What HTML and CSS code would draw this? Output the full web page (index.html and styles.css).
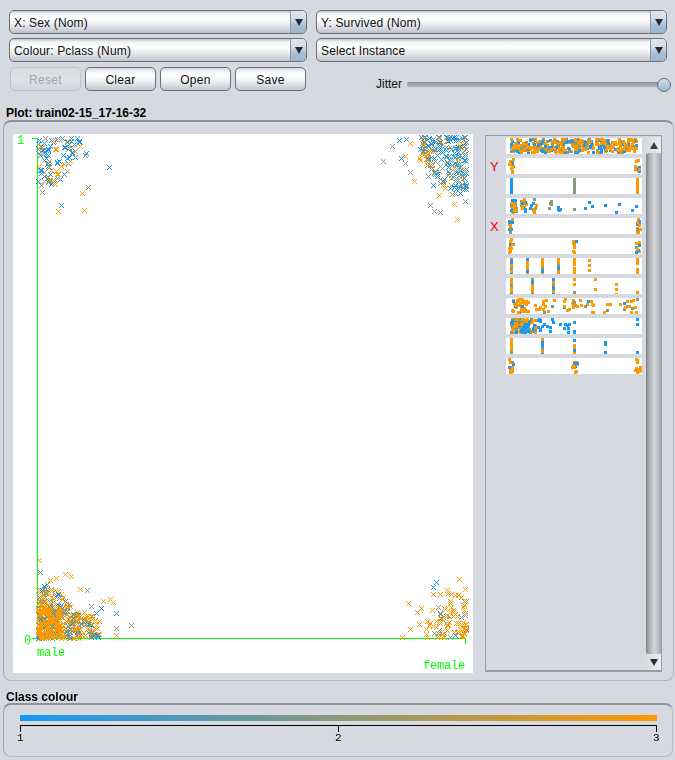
FILE: index.html
```html
<!DOCTYPE html>
<html lang="en">
<head>
<meta charset="utf-8">
<title>Plot: train02-15_17-16-32</title>
<link rel="stylesheet" href="styles.css">
</head>
<body>
<div class="controls">
  <div class="combo"><span class="combo-text">X: Sex (Nom)</span><span class="combo-arrow"><i class="tri"></i></span></div>
  <div class="combo"><span class="combo-text">Y: Survived (Nom)</span><span class="combo-arrow"><i class="tri"></i></span></div>
  <div class="combo"><span class="combo-text">Colour: Pclass (Num)</span><span class="combo-arrow"><i class="tri"></i></span></div>
  <div class="combo"><span class="combo-text">Select Instance</span><span class="combo-arrow"><i class="tri"></i></span></div>
  <div class="buttons">
    <button class="btn" disabled>Reset</button>
    <button class="btn">Clear</button>
    <button class="btn">Open</button>
    <button class="btn">Save</button>
  </div>
  <div class="jitter">
    <span class="jitter-label">Jitter</span>
    <div class="slider"><span class="slider-thumb"></span></div>
  </div>
</div>

<h2 class="section-title plot-title">Plot: train02-15_17-16-32</h2>
<section class="plot-panel">
  <div class="plot">
    <canvas id="scatter" width="460" height="539"></canvas>
    <span class="plot-label y1">1</span>
    <span class="plot-label y0">0</span>
    <span class="plot-label xmale">male</span>
    <span class="plot-label xfemale">female</span>
  </div>
  <div class="side">
    <div class="strips" id="strips"></div>
    <div class="scrollbar">
      <span class="sb-btn sb-up"><i class="tri-up"></i></span>
      <span class="sb-thumb"></span>
      <span class="sb-btn sb-down"><i class="tri"></i></span>
    </div>
  </div>
</section>

<h2 class="section-title legend-title">Class colour</h2>
<section class="legend-panel">
  <div class="legend-bar"></div>
  <div class="legend-axis">
    <span class="tick"><span class="tick-label">1</span></span>
    <span class="tick"><span class="tick-label">2</span></span>
    <span class="tick"><span class="tick-label">3</span></span>
  </div>
</section>
<script src="script.js"></script>
</body>
</html>
```
FILE: styles.css
```css
* { box-sizing: border-box; }
html, body { margin: 0; padding: 0; }
body {
  width: 675px;
  height: 760px;
  overflow: hidden;
  background: #d6d9df;
  font-family: "Liberation Sans", Arial, sans-serif;
  font-size: 12px;
  color: #111;
}

/* top controls */
.controls {
  display: grid;
  grid-template-columns: 298px 351px;
  grid-auto-rows: 24px;
  column-gap: 9px;
  row-gap: 4px;
  padding: 10px 0 0 9px;
}
.combo {
  display: flex;
  align-items: stretch;
  border: 1px solid #6a7078;
  border-radius: 5px;
  overflow: hidden;
  background: linear-gradient(#c2c5cb 0, #f4f5f7 14%, #ffffff 35%, #e6e8ec 65%, #bfc3cb 100%);
}
.combo-text { flex: 1; padding: 1px 0 0 4px; line-height: 22px; letter-spacing: 0.15px; }
.combo-arrow {
  width: 16px;
  display: flex;
  align-items: center;
  justify-content: center;
  border-left: 1px solid #8a97a6;
  background: linear-gradient(#dfe6ee 0, #d3deea 35%, #a9bfd4 65%, #9db6ce 100%);
}
.tri {
  display: block;
  width: 0;
  height: 0;
  border-left: 4px solid transparent;
  border-right: 4px solid transparent;
  border-top: 7px solid #2a2e33;
}
.tri-up {
  display: block;
  width: 0;
  height: 0;
  border-left: 4px solid transparent;
  border-right: 4px solid transparent;
  border-bottom: 7px solid #3a3d42;
}
.buttons {
  display: flex;
  gap: 4px;
  margin-top: 1px;
  padding-left: 1px;
}
.btn {
  width: 71px;
  height: 24px;
  padding: 2px 0 0;
  border: 1px solid #6a7078;
  border-radius: 5px;
  font: 12px "Liberation Sans", Arial, sans-serif;
  letter-spacing: 0.3px;
  color: #111;
  background: linear-gradient(#d4d6db 0, #f6f7f8 18%, #ffffff 38%, #e6e8ec 68%, #c2c6cd 100%);
}
.btn:disabled {
  color: #a3a6ab;
  border-color: #c0c3c9;
  background: linear-gradient(#d9dbe0, #e0e2e6 50%, #d2d5db);
}
.jitter {
  display: flex;
  align-items: center;
  margin: 6px -4px 0 0;
  padding-left: 60px;
  height: 24px;
}
.jitter-label { width: 31px; }
.slider {
  position: relative;
  flex: 1;
  height: 5px;
  border-radius: 3px;
  background: linear-gradient(#8e929c, #b4b7bf);
}
.slider-thumb {
  position: absolute;
  right: 0;
  top: -4px;
  width: 14px;
  height: 14px;
  border-radius: 50%;
  border: 1px solid #5d6f82;
  background: linear-gradient(#d3dde8, #9db4c9);
}

/* section titles */
.section-title {
  margin: 0 0 0 6px;
  font-size: 12px;
  line-height: 14px;
  font-weight: bold;
  color: #000;
}
.plot-title { margin-top: 16px; letter-spacing: -0.05px; }
.legend-title { margin-top: 9px; }

/* plot */
.plot-panel {
  display: flex;
  align-items: flex-start;
  gap: 12px;
  width: 671px;
  height: 561px;
  margin: 0 0 0 3px;
  padding: 12px 0 0 9px;
  border: 1px solid #b5b8be;
  border-top: 2px solid #8e9196;
  border-left: 1px solid #a4a7ad;
  border-radius: 8px;
}
.plot {
  position: relative;
  width: 460px;
  height: 539px;
  background: #fff;
}
#scatter { display: block; }
.plot-label {
  position: absolute;
  font-family: "Liberation Mono", "DejaVu Sans Mono", monospace;
  font-size: 12px;
  line-height: 12px;
  letter-spacing: -0.2px;
  color: #00ff00;
}
.y1 { left: 4px; top: 1px; }
.y0 { left: 11px; top: 501px; }
.xmale { left: 24px; top: 513px; }
.xfemale { right: 8px; top: 526px; }

/* side panel */
.side {
  display: flex;
  justify-content: space-between;
  width: 177px;
  height: 537px;
  margin-top: 1px;
  border: 2px solid #979ba3;
  border-width: 1px 1px 2px 1px;
}
.strips {
  display: flex;
  flex-direction: column;
  gap: 4px;
  padding: 2px 0 0 4px;
}
.strip-row { display: flex; align-items: center; height: 16px; }
.strip-label {
  width: 16px;
  padding-top: 1px;
  color: #ee0000;
  font-size: 13px;
  line-height: 16px;
}
.strip { display: block; background: #fff; }
.scrollbar {
  display: flex;
  flex-direction: column;
  width: 15px;
  padding-top: 1px;
}
.sb-btn {
  display: flex;
  align-items: center;
  justify-content: center;
  height: 16px;
  background: linear-gradient(90deg, #d9dadd, #eceded);
}
.sb-thumb {
  flex: 1;
  border-radius: 3px 3px 2px 2px;
  background: linear-gradient(90deg, #7f8083 0, #a9aaad 20%, #d3d4d7 55%, #c0c1c4 80%, #a2a3a6 100%);
}

/* legend */
.legend-panel {
  width: 670px;
  height: 54px;
  margin: -1px 0 0 3px;
  padding: 10px 15px 0 16px;
  border: 1px solid #b9bcc2;
  border-top: 2px solid #8e9196;
  border-left: 1px solid #a4a7ad;
  border-radius: 8px;
}
.legend-bar {
  height: 6px;
  background: linear-gradient(90deg, #1499f5, #ff9900);
}
.legend-axis {
  display: flex;
  justify-content: space-between;
  height: 6px;
  margin-top: 4px;
  border-top: 1px solid #000;
}
.tick {
  position: relative;
  width: 1px;
  height: 6px;
  background: #000;
}
.tick-label {
  position: absolute;
  left: -3px;
  top: 6px;
  font-family: "Liberation Mono", "DejaVu Sans Mono", monospace;
  font-size: 11px;
  line-height: 12px;
  color: #000;
}
```
FILE: script.js
```js
(function () {
  var BLUE = '#1499f5', ORANGE = '#ff9900', GRAY = '#87997c', GREEN = '#00ff00';
  var seed = 20210217;
  /* mulberry32: a small seeded generator, so the picture is the same every run */
  function rnd() {
    seed = (seed + 0x6D2B79F5) | 0;
    var t = Math.imul(seed ^ (seed >>> 15), 1 | seed);
    t = (t + Math.imul(t ^ (t >>> 7), 61 | t)) ^ t;
    return ((t ^ (t >>> 14)) >>> 0) / 4294967296;
  }
  function pick(b, o) {
    var r = rnd();
    return r < b ? BLUE : r < b + o ? ORANGE : GRAY;
  }

  /* scatter: page coordinates minus the plot's origin */
  var OX = 13, OY = 134;
  var ctx = document.getElementById('scatter').getContext('2d');
  function cross(x, y, c) {
    x = Math.round(x) - OX;
    y = Math.round(y) - OY;
    ctx.fillStyle = c;
    for (var i = -2; i <= 2; i++) {
      ctx.fillRect(x + i, y + i, 1, 1);
      ctx.fillRect(x + i, y - i, 1, 1);
    }
  }
  /* points fill a corner and thin out along the diagonal */
  function cloud(x0, y0, dx, dy, n, b, o, p, cut) {
    var placed = 0;
    while (placed < n) {
      var u = Math.pow(rnd(), p), v = Math.pow(rnd(), p);
      if (u + v > cut) continue;
      cross(x0 + dx * u, y0 + dy * v, pick(b, o));
      placed++;
    }
  }
  function list(pts, c) {
    pts.forEach(function (q) { cross(q[0], q[1], c); });
  }

  ctx.fillStyle = GREEN;
  ctx.fillRect(37 - OX, 138 - OY, 1, 501);
  ctx.fillRect(37 - OX, 638 - OY, 429, 1);
  ctx.fillRect(32 - OX, 138 - OY, 5, 1);
  ctx.fillRect(32 - OX, 638 - OY, 5, 1);
  ctx.fillRect(465 - OX, 638 - OY, 1, 6);

  /* top left */
  cloud(38, 138, 42, 48, 95, 0.55, 0.28, 1.2, 1.4);
  list([[109, 167], [61, 205], [86, 153]], BLUE);
  list([[82, 193], [58, 211], [84, 210], [49, 180]], ORANGE);
  list([[88, 187], [42, 192], [72, 153], [85, 155]], GRAY);

  /* top right */
  cloud(466, 137, -48, 54, 190, 0.58, 0.24, 1.35, 1.4);
  list([[399, 140], [406, 139], [401, 158], [460, 193], [421, 137], [433, 185]], BLUE);
  list([[410, 143], [405, 156], [414, 181], [439, 195], [454, 204], [457, 219], [424, 148], [422, 153]], ORANGE);
  list([[392, 146], [383, 161], [405, 163], [410, 172], [452, 194], [455, 193], [464, 189], [465, 201], [430, 205], [434, 211], [440, 212], [428, 176]], GRAY);

  /* bottom left */
  cloud(38, 638, 62, -50, 340, 0.2, 0.62, 1.35, 1.3);
  cloud(38, 638, 24, -30, 210, 0.06, 0.88, 1, 2);
  list([[116, 613], [101, 608], [96, 613], [88, 624], [94, 635], [44, 586]], BLUE);
  list([[39, 560], [65, 574], [71, 576], [80, 589], [50, 580], [103, 601], [110, 599], [113, 602], [99, 621], [116, 635], [56, 578]], ORANGE);
  list([[87, 590], [131, 625], [116, 628], [47, 584], [91, 606], [40, 572], [84, 620]], GRAY);

  /* bottom right */
  cloud(466, 637, -36, -44, 70, 0.03, 0.87, 1.35, 1.5);
  list([[436, 582], [433, 587], [455, 635]], BLUE);
  list([[459, 579], [465, 589], [447, 590], [448, 593], [433, 594], [440, 594], [458, 595], [408, 603], [421, 608], [417, 612], [432, 610],
    [444, 608], [419, 624], [410, 629], [427, 621], [429, 625], [426, 629], [426, 634], [427, 637], [402, 637], [444, 637], [437, 637]], ORANGE);
  list([[438, 607], [441, 618], [438, 633], [461, 617]], GRAY);

  /* strips */
  function dots(c, xs, col, yFrom, yTo, n, spread) {
    for (var i = 0; i < n; i++) {
      var x = xs + Math.round(rnd() * spread);
      var y = yFrom + Math.floor(rnd() * (yTo - yFrom));
      c.fillStyle = typeof col === 'function' ? col() : col;
      c.fillRect(x - 506, y, 3, 3);
    }
  }
  var mix = function () { return pick(0.3, 0.5); };
  var mostlyOrange = function () { return pick(0.12, 0.78); };
  var mostlyBlue = function () { return pick(0.65, 0.3); };
  function column(c, x, col, ys) {
    c.fillStyle = col;
    ys.forEach(function (s) { c.fillRect(x - 506, s[0], 3, s[1]); });
  }
  var A = [[0, 16]];
  var painters = [
    function (c) { dots(c, 510, function () { return pick(0.27, 0.6); }, 0, 14, 400, 125); },
    function (c) { dots(c, 508, mostlyOrange, 0, 14, 12, 4); dots(c, 634, mostlyOrange, 0, 14, 12, 4); },
    function (c) { column(c, 510, BLUE, A); column(c, 573, GRAY, A); column(c, 636, ORANGE, A); },
    function (c) {
      dots(c, 510, mix, 0, 14, 26, 6); dots(c, 520, mix, 0, 14, 18, 5); dots(c, 529, mix, 0, 14, 12, 6);
      dots(c, 547, GRAY, 2, 10, 4, 5); dots(c, 556, BLUE, 2, 14, 6, 4);
      dots(c, 568, BLUE, 2, 14, 8, 70); dots(c, 572, GRAY, 10, 14, 1, 1);
    },
    function (c) { dots(c, 508, function () { return pick(0.25, 0.45); }, 0, 14, 14, 3); dots(c, 635, mostlyOrange, 0, 14, 14, 4); },
    function (c) { dots(c, 508, mostlyOrange, 0, 14, 13, 4); dots(c, 571, mostlyOrange, 0, 14, 9, 4); dots(c, 634, mostlyOrange, 0, 14, 11, 4); },
    function (c) {
      var cm = function (x) { for (var y = 0; y < 16; y += 3) { c.fillStyle = pick(0.25, 0.6); c.fillRect(x - 506, y, 3, 3); } };
      cm(510); cm(526); cm(541); cm(557);
      column(c, 573, ORANGE, [[0, 8], [9, 7]]);
      column(c, 588, ORANGE, [[1, 3], [6, 3], [11, 3]]);
      column(c, 636, ORANGE, [[0, 7], [10, 6]]);
    },
    function (c) {
      var cm = function (x) { for (var y = 0; y < 16; y += 3) { c.fillStyle = pick(0.3, 0.5); c.fillRect(x - 506, y, 3, 3); } };
      cm(510); cm(531); cm(552);
      column(c, 573, ORANGE, [[0, 3], [5, 3]]); column(c, 573, GRAY, [[13, 3]]);
      column(c, 594, ORANGE, [[0, 3], [10, 3]]);
      column(c, 615, ORANGE, [[5, 3], [10, 3], [15, 1]]);
      column(c, 636, ORANGE, [[13, 3]]);
    },
    function (c) {
      dots(c, 510, function () { return pick(0.18, 0.72); }, 0, 14, 38, 18);
      dots(c, 528, function () { return pick(0.05, 0.72); }, 0, 14, 34, 65);
      dots(c, 590, function () { return pick(0.1, 0.55); }, 0, 14, 20, 46);
      dots(c, 636, GRAY, 0, 4, 1, 1);
    },
    function (c) {
      dots(c, 510, function () { return pick(0.25, 0.7); }, 0, 14, 90, 12);
      dots(c, 518, function () { return pick(0.55, 0.35); }, 0, 14, 60, 16);
      dots(c, 536, BLUE, 0, 14, 14, 16);
      dots(c, 556, BLUE, 4, 14, 8, 14);
      column(c, 573, BLUE, [[3, 3], [12, 4]]);
      column(c, 636, BLUE, [[0, 3], [5, 3]]);
    },
    function (c) {
      column(c, 510, ORANGE, [[0, 13]]); column(c, 510, GRAY, [[13, 3]]);
      for (var y = 0; y < 16; y += 3) { c.fillStyle = pick(0.5, 0.2); c.fillRect(541 - 506, y, 3, 3); }
      column(c, 573, BLUE, [[1, 3], [11, 3]]); column(c, 573, ORANGE, [[6, 5], [14, 2]]);
      column(c, 604, BLUE, [[3, 5], [13, 3]]);
      column(c, 636, BLUE, [[13, 3]]);
    },
    function (c) { dots(c, 508, mostlyOrange, 0, 14, 12, 4); dots(c, 571, mostlyBlue, 2, 14, 4, 4); dots(c, 571, mostlyOrange, 0, 14, 10, 5); dots(c, 634, ORANGE, 0, 14, 14, 5); }
  ];
  var labels = { 1: 'Y', 4: 'X' };
  var host = document.getElementById('strips');
  painters.forEach(function (paint, i) {
    var row = document.createElement('div');
    row.className = 'strip-row';
    var lab = document.createElement('span');
    lab.className = 'strip-label';
    lab.textContent = labels[i] || '';
    var cv = document.createElement('canvas');
    cv.className = 'strip';
    cv.width = 136;
    cv.height = 16;
    row.appendChild(lab);
    row.appendChild(cv);
    host.appendChild(row);
    paint(cv.getContext('2d'));
  });
})();
```
